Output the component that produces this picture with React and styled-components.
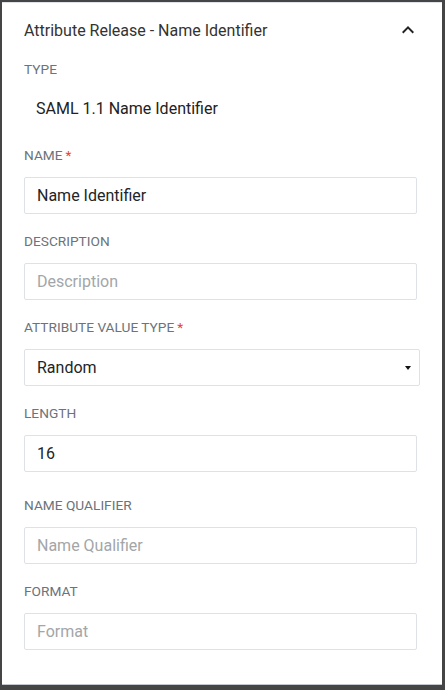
import React from "react";
import styled, { createGlobalStyle } from "styled-components";

const Global = createGlobalStyle`
  html, body { margin: 0; padding: 0; background: #454545; }
  body { font-family: Roboto, "Noto Sans", Arial, sans-serif; }
  * { box-sizing: border-box; }
`;

const Frame = styled.div`
  height: 690px;
  padding: 2px 3px 5px 2px;
  display: flex;
`;

const Card = styled.section`
  flex: 1;
  background: #fff;
  border-top: 1px solid #dfe3e8;
  border-bottom: 1px solid #c3c8ce;
  display: flex;
  flex-direction: column;
`;

const Header = styled.div`
  height: 54px;
  display: flex;
  align-items: center;
  justify-content: space-between;
  padding: 0 22px 0 22px;
  font-size: 16px;
  color: #333;
`;

const Body = styled.div`
  padding: 2px 25px 0 22px;
  display: flex;
  flex-direction: column;
`;

const Label = styled.div`
  font-size: 13.7px;
  line-height: 20px;
  color: #6b737b;
  text-transform: uppercase;
  margin-top: ${(p) => p.$mt || 0}px;
  display: flex;
  gap: 3px;
`;

const Req = styled.span`
  color: #e8452c;
`;

const Static = styled.div`
  font-size: 16px;
  line-height: 20px;
  color: #222;
  padding-left: 12px;
  margin-top: 20px;
`;

const Input = styled.input`
  margin-top: 12px;
  height: 37px;
  width: 100%;
  border: 1px solid #dee2e6;
  border-radius: 2px;
  padding: 0 12px;
  font-family: inherit;
  font-size: 16px;
  color: #212529;
  outline: none;
  &::placeholder { color: #a3a6a9; }
`;

const SelectBox = styled.div`
  margin-top: 12px;
  height: 37px;
  margin-right: -3px;
  border: 1px solid #dee2e6;
  border-radius: 2px;
  padding: 0 8px 0 12px;
  display: flex;
  align-items: center;
  justify-content: space-between;
  font-size: 16px;
  color: #212529;
`;

const Caret = styled.span`
  width: 0;
  height: 0;
  border-left: 3.5px solid transparent;
  border-right: 3.5px solid transparent;
  border-top: 4px solid #111;
`;

const Chevron = () => (
  <svg width="24" height="24" viewBox="0 0 24 24">
    <path d="M7.41 15.41 12 10.83l4.59 4.58L18 14l-6-6-6 6z" fill="#222" />
  </svg>
);

const fields = [
  { label: "Name", required: true, value: "Name Identifier", mt: 26 },
  { label: "Description", placeholder: "Description", mt: 17 },
  { label: "Attribute Value Type", required: true, select: "Random", mt: 17 },
  { label: "Length", value: "16", mt: 17 },
  { label: "Name Qualifier", placeholder: "Name Qualifier", mt: 23 },
  { label: "Format", placeholder: "Format", mt: 17 },
];

export default function App() {
  return (
    <>
      <Global />
      <Frame>
        <Card>
          <Header>
            <span>Attribute Release - Name Identifier</span>
            <Chevron />
          </Header>
          <Body>
            <Label>Type</Label>
            <Static>SAML 1.1 Name Identifier</Static>
            {fields.map((f) => (
              <React.Fragment key={f.label}>
                <Label $mt={f.mt}>
                  {f.label}
                  {f.required && <Req>*</Req>}
                </Label>
                {f.select ? (
                  <SelectBox>
                    <span>{f.select}</span>
                    <Caret />
                  </SelectBox>
                ) : (
                  <Input
                    defaultValue={f.value}
                    placeholder={f.placeholder}
                    readOnly
                  />
                )}
              </React.Fragment>
            ))}
          </Body>
        </Card>
      </Frame>
    </>
  );
}
